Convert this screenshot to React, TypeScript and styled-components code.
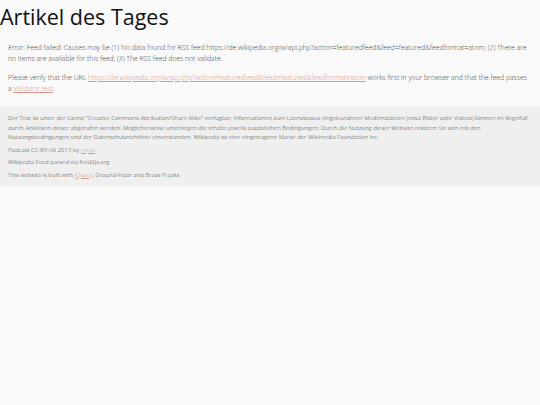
import React from 'react'
import styled, { createGlobalStyle } from 'styled-components'

const GlobalStyle = createGlobalStyle`
  html, body {
    margin: 0;
    padding: 0;
    background-color: #f9f9f9;
    font-family: 'Open Sans', 'Liberation Sans', sans-serif;
    font-weight: 300;
  }
`

const feedUrl = 'https://de.wikipedia.org/w/api.php?action=featuredfeed&feed=featured&feedformat=atom'

const App = () => {
  return (
    <>
      <GlobalStyle />
      <Page>
        <Title>Artikel des Tages</Title>
        <Content>
          <Paragraph>
            <em>Error</em>: Feed failed! Causes may be (1) No data found for RSS feed {feedUrl}; (2) There are no
            items are available for this feed; (3) The RSS feed does not validate.
          </Paragraph>
          <Paragraph>
            Please verify that the URL <Link href="#">{feedUrl}</Link> works first in your browser and that the feed
            passes a <Link href="#">validator test</Link>.
          </Paragraph>
        </Content>
        <Footer>
          <FooterText>
            Der Text ist unter der Lizenz "Creative Commons Attribution/Share Alike" verfügbar; Informationen zum
            Lizenzstatus eingebundener Mediendateien (etwa Bilder oder Videos) können im Regelfall durch Anklicken
            dieser abgerufen werden. Möglicherweise unterliegen die Inhalte jeweils zusätzlichen Bedingungen. Durch die
            Nutzung dieser Website erklären Sie sich mit den Nutzungsbedingungen und der Datenschutzrichtlinie
            einverstanden. Wikipedia ist eine eingetragene Marke der Wikimedia Foundation Inc.
          </FooterText>
          <FooterText>
            Podcast CC-BY-SA 2013 by <Link href="#">repat</Link>
          </FooterText>
          <FooterText>Wikipedia Feed parsed via feed2js.org</FooterText>
          <FooterText>
            This website is built with <Link href="#">jQuery</Link>, Ground-Floor and Brass-Tracks
          </FooterText>
        </Footer>
      </Page>
    </>
  )
}

const Page = styled.div`
  display: flex;
  flex-direction: column;
`
const Title = styled.h1`
  margin: 0;
  padding: 0;
  font-size: 21.5px;
  font-weight: 400;
  line-height: 33px;
  color: #111;
`
const Content = styled.div`
  padding: 10px 8px 12px;
  display: flex;
  flex-direction: column;
  gap: 9px;
`
const Paragraph = styled.p`
  margin: 0;
  font-size: 6.85px;
  line-height: 10.5px;
  color: #444;

  em {
    font-style: italic;
  }
`
const Link = styled.a`
  color: #d9948a;
  text-decoration: underline;
`
const Footer = styled.footer`
  background-color: #efefef;
  padding: 8px 8px 6px;
  display: flex;
  flex-direction: column;
  gap: 3px;
`
const FooterText = styled.p`
  margin: 0;
  font-size: 6px;
  line-height: 9.5px;
  color: #444;
`

export default App
